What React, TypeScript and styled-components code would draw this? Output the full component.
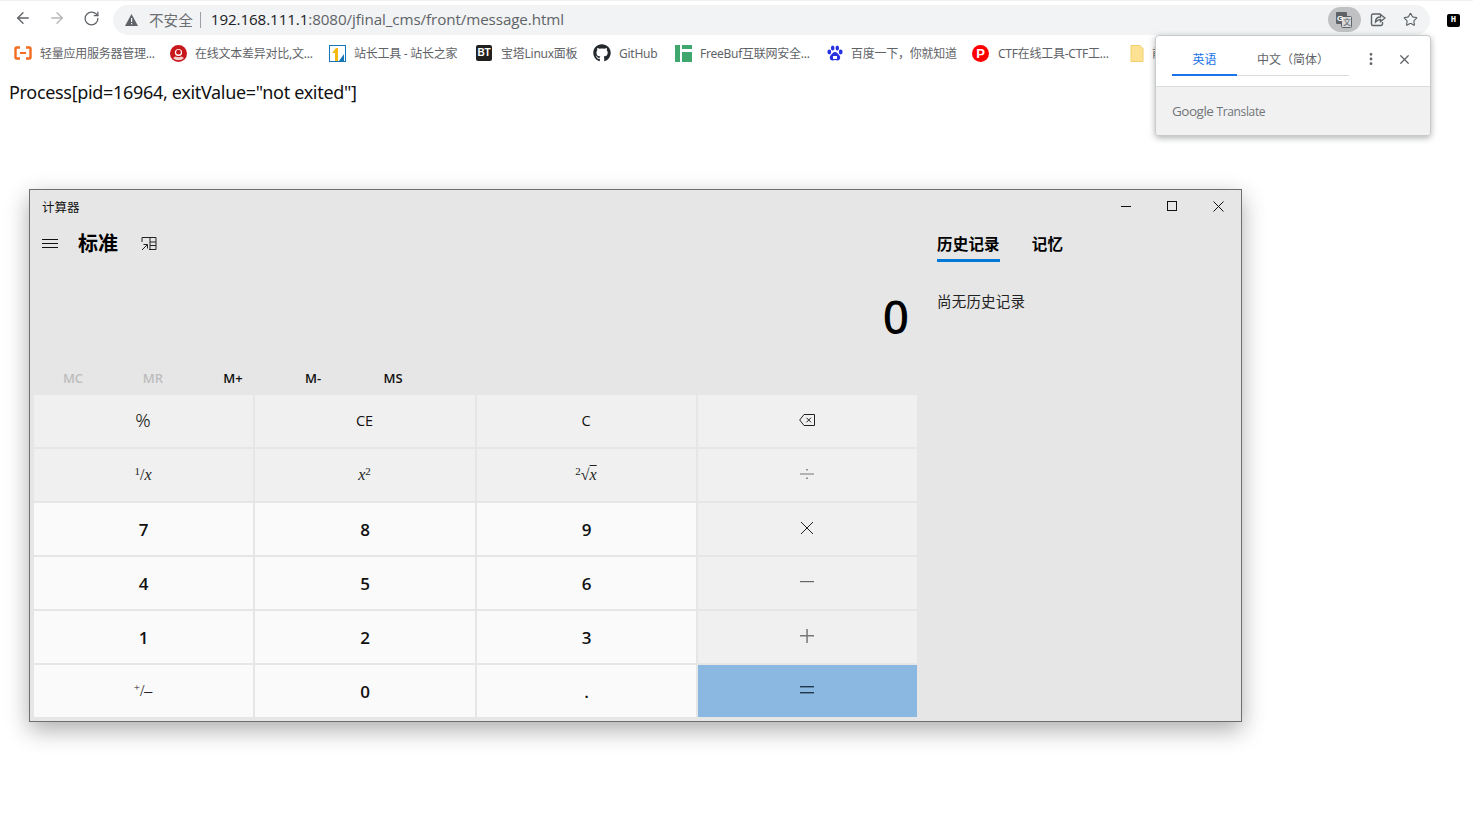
import styled, { createGlobalStyle } from "styled-components";
import { ArrowLeft, ArrowRight, RotateCw, Star, X, EllipsisVertical } from "lucide-react";
import { FaGithub } from "react-icons/fa";
import type { ReactNode } from "react";

const GlobalStyle = createGlobalStyle`
  html, body {
    margin: 0;
    padding: 0;
    background: #fff;
    overflow: hidden;
  }
`;

const SANS = `"Open Sans", "Noto Sans CJK SC", sans-serif`;
const CJK = `"Noto Sans", "Noto Sans CJK SC", sans-serif`;

const Page = styled.div`
  position: relative;
  width: 1473px;
  height: 816px;
  font-family: ${SANS};
  overflow: hidden;
`;

const Toolbar = styled.div`
  display: flex;
  align-items: center;
  height: 35px;
  padding: 0 9px 0 13px;
  box-sizing: border-box;
  border-top: 1px solid #f1f1f1;
`;

const NavButton = styled.div<{ $dim?: boolean }>`
  display: flex;
  justify-content: center;
  width: 20px;
  margin-right: 14px;
  color: ${(p) => (p.$dim ? "#b4b6b8" : "#5f6368")};
`;

const Omnibox = styled.div`
  flex: 1;
  display: flex;
  align-items: center;
  height: 30px;
  margin-top: 3px;
  margin-left: -2px;
  padding-left: 12px;
  padding-right: 3px;
  margin-right: 34px;
  border-radius: 15px;
  background: #f1f3f4;
  font-size: 15.2px;
  color: #5f6368;
`;

const Insecure = styled.span`
  margin-left: 11px;
  padding-right: 7px;
  border-right: 1px solid #9aa0a6;
  line-height: 16px;
  font-family: ${CJK};
  font-size: 14.6px;
  color: #6b6f73;
`;

const Url = styled.span`
  flex: 1;
  margin-left: 10px;
  padding-bottom: 2px;
  letter-spacing: -0.1px;
  color: #5f6368;
  b {
    font-weight: 400;
    color: #202124;
  }
`;

const OmniAction = styled.div<{ $active?: boolean }>`
  display: flex;
  align-items: center;
  justify-content: center;
  width: 33px;
  height: 25px;
  border-radius: 13px;
  background: ${(p) => (p.$active ? "#bfc1c2" : "transparent")};
  color: #5f6368;
  svg {
    margin-right: ${(p) => (p.$active ? "2px" : "0")};
  }
`;

const ExtIcon = styled.div`
  position: absolute;
  top: 14px;
  left: 1447px;
  width: 13px;
  height: 13px;
  border-radius: 2px;
  background: #000;
  color: #fff;
  font: 700 9px/13px "Liberation Mono", monospace;
  text-align: center;
`;

const Bookmarks = styled.div`
  display: flex;
  align-items: center;
  height: 36px;
  padding-left: 14px;
  white-space: nowrap;
  overflow: hidden;
`;

const Bookmark = styled.div<{ $w: number; $gap?: number }>`
  display: flex;
  align-items: center;
  flex: none;
  gap: ${(p) => p.$gap ?? 8}px;
  width: ${(p) => p.$w}px;
  font-family: ${CJK};
  font-size: 12px;
  letter-spacing: -0.25px;
  color: #5f6368;
  svg {
    flex: none;
  }
`;

const BadgeLogo = styled.span`
  flex: none;
  width: 16px;
  height: 16px;
  border-radius: 2px;
  background: #20201e;
  color: #fff;
  font: 700 10px/16px "Liberation Sans", sans-serif;
  text-align: center;
`;

const RoundLogo = styled.span`
  flex: none;
  width: 17px;
  height: 17px;
  border-radius: 50%;
  background: #f00;
  color: #fff;
  font: 700 13px/17px "Liberation Sans", sans-serif;
  text-align: center;
`;

const ProcessLine = styled.div`
  margin: 8px 0 0 9px;
  height: 27px;
  line-height: 27px;
  font-family: "Noto Sans", sans-serif;
  font-size: 18px;
  letter-spacing: -0.32px;
  color: #111;
`;

const Popup = styled.div`
  position: absolute;
  top: 35px;
  left: 1155px;
  width: 276px;
  height: 101px;
  box-sizing: border-box;
  border-radius: 4px;
  background: #fff;
  border: 1px solid #c9cacb;
  box-shadow: 0 2px 6px rgba(60, 64, 67, 0.4);
  overflow: hidden;
`;

const PopupTop = styled.div`
  display: flex;
  height: 50px;
  padding-left: 16px;
  border-bottom: 1px solid #dadce0;
`;

const LangTabs = styled.div`
  display: flex;
  align-self: flex-start;
  margin-top: 1px;
  height: 39px;
  width: 177px;
  border-bottom: 1px solid #dadce0;
  box-sizing: border-box;
`;

const LangTab = styled.div<{ $on?: boolean }>`
  width: ${(p) => (p.$on ? "65px" : "auto")};
  flex: ${(p) => (p.$on ? "none" : "1")};
  height: 39px;
  box-sizing: border-box;
  padding-top: 14px;
  text-align: center;
  font-family: ${CJK};
  font-size: 12px;
  line-height: 18px;
  white-space: nowrap;
  color: ${(p) => (p.$on ? "#1a73e8" : "#5f6368")};
  border-bottom: ${(p) => (p.$on ? "2px solid #1a73e8" : "none")};
`;

const PopupIcon = styled.div<{ $gap: number }>`
  display: flex;
  align-items: center;
  height: 46px;
  margin-left: ${(p) => p.$gap}px;
  color: #5f6368;
`;

const PopupFoot = styled.div`
  display: flex;
  align-items: center;
  height: 48px;
  padding-left: 16px;
  padding-bottom: 2px;
  background: #f1f1f1;
  color: #70757a;
  font-family: "Open Sans", sans-serif;
  font-size: 12px;
  letter-spacing: -0.35px;
  span {
    font-size: 13.5px;
    margin-right: 3px;
    letter-spacing: -0.5px;
  }
`;

const Calc = styled.div`
  margin: 83px 0 0 29px;
  width: 1213px;
  height: 533px;
  box-sizing: border-box;
  display: flex;
  flex-direction: column;
  background: #e6e6e6;
  border: 1px solid #6e6e6e;
  box-shadow: 0 8px 22px rgba(0, 0, 0, 0.32);
  font-family: ${CJK};
  color: #000;
`;

const TitleBar = styled.div`
  display: flex;
  align-items: center;
  justify-content: space-between;
  flex: none;
  height: 32px;
  padding-left: 12px;
  font-size: 12.5px;
  color: #111;
`;

const WinButtons = styled.div`
  display: flex;
`;

const WinButton = styled.div`
  display: flex;
  align-items: center;
  justify-content: center;
  width: 46px;
  height: 32px;
`;

const CalcBody = styled.div`
  flex: 1;
  display: flex;
`;

const MainPane = styled.div`
  display: flex;
  flex-direction: column;
  width: 888px;
  flex: none;
  padding-left: 4px;
`;

const ModeBar = styled.div`
  display: flex;
  align-items: center;
  box-sizing: border-box;
  height: 42px;
  margin-top: 2px;
  padding-bottom: 2px;
  padding-left: 8px;
`;

const ModeTitle = styled.div`
  margin: 0 23px 0 20px;
  font-size: 20px;
  font-weight: 700;
  line-height: 40px;
`;

const Display = styled.div`
  height: 95px;
  padding-right: 13px;
  text-align: right;
  font-family: "Noto Sans", sans-serif;
  font-weight: 500;
  font-size: 46px;
  line-height: 100px;
  color: #000;
`;

const MemoryRow = styled.div`
  display: flex;
  height: 34px;
  align-items: center;
  margin-left: -1px;
`;

const MemoryKey = styled.div<{ $off?: boolean }>`
  width: 80px;
  padding-bottom: 1px;
  text-align: center;
  font-family: "Open Sans", sans-serif;
  font-size: 13px;
  font-weight: 600;
  color: ${(p) => (p.$off ? "#bdbdbd" : "#111")};
`;

const Keypad = styled.div`
  display: grid;
  grid-template-columns: 219px 220px 219px 219px;
  grid-auto-rows: 52px;
  column-gap: 2px;
  row-gap: 2px;
`;

const KEY_BG = { fn: "#f0f0f0", num: "#fafafa", eq: "#8ab8e0" };

const Key = styled.div<{ $tone: "fn" | "num" | "eq"; $bold?: boolean }>`
  display: flex;
  align-items: center;
  justify-content: center;
  box-sizing: border-box;
  padding: ${(p) => (p.$bold ? "0" : "0 1px 2px 0")};
  background: ${(p) => KEY_BG[p.$tone]};
  color: #111;
  font-family: "Open Sans", sans-serif;
  font-size: ${(p) => (p.$bold ? "17px" : "14.5px")};
  font-weight: ${(p) => (p.$bold ? 600 : 400)};
`;

const Percent = styled.span`
  font-family: "Noto Sans", sans-serif;
  font-size: 19px;
  font-weight: 300;
`;

const MathGlyph = styled.span`
  margin-top: 2px;
  font-family: "Liberation Serif", serif;
  font-size: 16px;
  color: #222;
  i {
    font-style: italic;
  }
  u {
    text-decoration: overline;
    font-style: italic;
  }
  sup {
    font-size: 11px;
    line-height: 0;
    vertical-align: 5px;
  }
`;

const SidePane = styled.div`
  flex: 1;
  padding: 7px 0 0 15px;
`;

const SideTabs = styled.div`
  display: flex;
  gap: 32px;
`;

const SideTab = styled.div<{ $on?: boolean }>`
  height: 33px;
  box-sizing: border-box;
  border-bottom: 3px solid ${(p) => (p.$on ? "#0078d7" : "transparent")};
  font-size: 15.5px;
  font-weight: 700;
  line-height: 30px;
  letter-spacing: 0.2px;
`;

const EmptyHistory = styled.div`
  margin-top: 27px;
  font-size: 14.5px;
  line-height: 24px;
  letter-spacing: 0.2px;
  color: #222;
`;

const Orange = () => (
  <svg width="18" height="14" viewBox="0 0 18 14">
    <path d="M6 1.5H2.5a1 1 0 0 0-1 1v9a1 1 0 0 0 1 1H6M12 1.5h3.5a1 1 0 0 1 1 1v9a1 1 0 0 1-1 1H12" fill="none" stroke="#f26c21" strokeWidth="2.4" />
    <rect x="6" y="6" width="6" height="2" fill="#f26c21" />
  </svg>
);

const RedCircle = () => (
  <svg width="17" height="17" viewBox="0 0 17 17">
    <circle cx="8.5" cy="8.5" r="8.5" fill="#c8161d" />
    <circle cx="8.5" cy="7.5" r="3.6" fill="#fff" />
    <circle cx="8.5" cy="7.2" r="2.4" fill="#c8161d" />
    <path d="M3 13c3 3 8 3 11 0l-2.5-1.5c-2 1-4 1-6 0z" fill="#f4d0d0" />
  </svg>
);

const Chinaz = () => (
  <svg width="17" height="17" viewBox="0 0 17 17">
    <rect x="0.5" y="0.5" width="16" height="16" fill="#fff" stroke="#1675b9" />
    <path d="M3 8l4-5h2v13H6V8z" fill="#f5b90f" />
    <path d="M10 16l5-7v7z" fill="#1675b9" />
  </svg>
);

const FreeBuf = () => (
  <svg width="17" height="17" viewBox="0 0 17 17">
    <rect width="5" height="17" fill="#3fa66d" />
    <rect x="7" width="10" height="4" fill="#3fa66d" />
    <rect x="7" y="7" width="10" height="10" fill="#3fa66d" />
  </svg>
);

const Paw = () => (
  <svg width="16" height="17" viewBox="0 0 16 17" fill="#2932e1">
    <ellipse cx="2.3" cy="7" rx="1.9" ry="2.4" />
    <ellipse cx="5.7" cy="3" rx="1.8" ry="2.5" />
    <ellipse cx="10.3" cy="3" rx="1.8" ry="2.5" />
    <ellipse cx="13.7" cy="7" rx="1.9" ry="2.4" />
    <path d="M8 7c2 0 3 2 4.5 3.5 1.5 1.8.5 5-2 5-1 0-1.500-.4-2.500-.4s-1.500.4-2.500.4c-2.500 0-3.500-3.200-2-5C5 9 6 7 8 7z" />
    <rect x="6" y="11" width="4" height="3" fill="#fff" />
  </svg>
);

const Folder = () => (
  <svg width="14" height="17" viewBox="0 0 14 17">
    <path d="M1 .5h9l3 3v13H1z" fill="#fde293" stroke="#f2cf6b" />
  </svg>
);

const Warning = () => (
  <svg width="13" height="12" viewBox="0 0 13 12">
    <path d="M6.500 0 13 12H0z" fill="#5f6368" />
    <rect x="6" y="4" width="1.200" height="4" fill="#f1f3f4" />
    <rect x="6" y="9" width="1.200" height="1.300" fill="#f1f3f4" />
  </svg>
);

const TranslateIcon = () => (
  <svg width="16" height="16" viewBox="0 0 16 16">
    <rect x="0" y="0" width="11" height="12" rx="1" fill="#5f6368" />
    <rect x="5.500" y="4.500" width="10" height="11" rx="1" fill="#d8d9da" stroke="#5f6368" />
    <text x="1" y="8.500" fontSize="8" fontWeight="700" fontFamily="Liberation Sans, sans-serif" fill="#fff">G</text>
    <text x="7" y="13" fontSize="8" fontFamily="Noto Sans CJK SC, sans-serif" fill="#5f6368">文</text>
  </svg>
);

const ShareIcon = () => (
  <svg width="16" height="15" viewBox="0 0 16 15" fill="none" stroke="#5f6368" strokeWidth="1.400">
    <path d="M10 2H3a1.500 1.500 0 0 0-1.500 1.500v8.500A1.500 1.500 0 0 0 3 13.500h8a1.500 1.500 0 0 0 1.500-1.500V10" />
    <path d="M5.500 10c0-3 2-5 5-5V2.500L15 6l-4.500 3.500V7.500c-2 0-3.500 1-5 2.500z" fill="#f1f3f4" />
  </svg>
);

const Hamburger = () => (
  <svg width="16" height="10" viewBox="0 0 16 10" stroke="#111">
    <path d="M0 .5h16M0 4.500h16M0 8.500h16" />
  </svg>
);

const CompactIcon = () => (
  <svg width="16" height="14" viewBox="0 0 16 14" fill="none" stroke="#222">
    <path d="M1 5V.5h14v12H8M9 .5v12M9 5h6M9 8.500h6" />
    <path d="M1 13l5-5M2.500 7.500H6.500V11.500" />
  </svg>
);

const Backspace = () => (
  <svg width="16" height="12" viewBox="0 0 16 12" fill="none" stroke="#222">
    <path d="M5 .5h10.500v11H5L.7 6z" />
    <path d="M7.500 3.800l4.500 4.500M12 3.800L7.500 8.300" />
  </svg>
);

const Divide = () => (
  <svg width="14" height="12" viewBox="0 0 14 12">
    <rect y="5.500" width="14" height="1" fill="#777" />
    <rect x="6.500" y="1" width="1" height="1.500" fill="#333" />
    <rect x="6.500" y="9.500" width="1" height="1.500" fill="#333" />
  </svg>
);

const Times = () => (
  <svg width="14" height="14" viewBox="0 0 14 14" stroke="#222">
    <path d="M1 1l12 12M13 1L1 13" />
  </svg>
);

const Dash = () => (
  <svg width="14" height="2" viewBox="0 0 14 2">
    <rect width="14" height="1.200" fill="#666" />
  </svg>
);

const Cross = () => (
  <svg width="14" height="14" viewBox="0 0 14 14">
    <rect y="6" width="14" height="1.500" fill="#777" />
    <rect x="6.300" width="1.500" height="14" fill="#777" />
  </svg>
);

const Equals = () => (
  <svg width="14" height="8" viewBox="0 0 14 8">
    <rect y="0" width="14" height="1.400" fill="#22384a" />
    <rect y="6" width="14" height="1.400" fill="#22384a" />
  </svg>
);

const WinMin = () => (
  <svg width="10" height="10" viewBox="0 0 10 10">
    <rect y="5" width="10" height="1" fill="#111" />
  </svg>
);

const WinMax = () => (
  <svg width="10" height="10" viewBox="0 0 10 10" fill="none" stroke="#111">
    <rect x=".5" y=".5" width="9" height="9" />
  </svg>
);

const WinClose = () => (
  <svg width="11" height="11" viewBox="0 0 11 11" stroke="#111">
    <path d="M.5 .5l10 10M10.500 .5l-10 10" />
  </svg>
);

const bookmarks: { w: number; gap?: number; icon: ReactNode; label: string }[] = [
  { w: 156, icon: <Orange />, label: "轻量应用服务器管理..." },
  { w: 159, icon: <RedCircle />, label: "在线文本差异对比,文..." },
  { w: 147, icon: <Chinaz />, label: "站长工具 - 站长之家" },
  { w: 117, gap: 9, icon: <BadgeLogo>BT</BadgeLogo>, label: "宝塔Linux面板" },
  { w: 82, icon: <FaGithub size={18} color="#24292e" />, label: "GitHub" },
  { w: 152, icon: <FreeBuf />, label: "FreeBuf互联网安全..." },
  { w: 145, icon: <Paw />, label: "百度一下\uFF0C你就知道" },
  { w: 158, gap: 9, icon: <RoundLogo>P</RoundLogo>, label: "CTF在线工具-CTF工..." },
  { w: 40, icon: <Folder />, label: "前端" },
];

const keys: { tone: "fn" | "num" | "eq"; bold?: boolean; content: ReactNode }[] = [
  { tone: "fn", content: <Percent>%</Percent> },
  { tone: "fn", content: "CE" },
  { tone: "fn", content: "C" },
  { tone: "fn", content: <Backspace /> },
  { tone: "fn", content: <MathGlyph><sup>1</sup>/<i>x</i></MathGlyph> },
  { tone: "fn", content: <MathGlyph><i>x</i><sup>2</sup></MathGlyph> },
  { tone: "fn", content: <MathGlyph><sup>2</sup>√<u>x</u></MathGlyph> },
  { tone: "fn", content: <Divide /> },
  { tone: "num", bold: true, content: "7" },
  { tone: "num", bold: true, content: "8" },
  { tone: "num", bold: true, content: "9" },
  { tone: "fn", content: <Times /> },
  { tone: "num", bold: true, content: "4" },
  { tone: "num", bold: true, content: "5" },
  { tone: "num", bold: true, content: "6" },
  { tone: "fn", content: <Dash /> },
  { tone: "num", bold: true, content: "1" },
  { tone: "num", bold: true, content: "2" },
  { tone: "num", bold: true, content: "3" },
  { tone: "fn", content: <Cross /> },
  { tone: "num", content: <MathGlyph><sup>+</sup>/–</MathGlyph> },
  { tone: "num", bold: true, content: "0" },
  { tone: "num", bold: true, content: "." },
  { tone: "eq", content: <Equals /> },
];

export default function App() {
  return (
    <Page>
      <GlobalStyle />
      <Toolbar>
        <NavButton><ArrowLeft size={18} strokeWidth={1.8} /></NavButton>
        <NavButton $dim><ArrowRight size={18} strokeWidth={1.8} /></NavButton>
        <NavButton><RotateCw size={17} strokeWidth={1.8} /></NavButton>
        <Omnibox>
          <Warning />
          <Insecure>不安全</Insecure>
          <Url><b>192.168.111.1</b>:8080/jfinal_cms/front/message.html</Url>
          <OmniAction $active><TranslateIcon /></OmniAction>
          <OmniAction><ShareIcon /></OmniAction>
          <OmniAction><Star size={15} strokeWidth={1.8} /></OmniAction>
        </Omnibox>
      </Toolbar>
      <ExtIcon>H</ExtIcon>
      <Bookmarks>
        {bookmarks.map((b) => (
          <Bookmark key={b.label} $w={b.w} $gap={b.gap}>
            {b.icon}
            <span>{b.label}</span>
          </Bookmark>
        ))}
      </Bookmarks>
      <ProcessLine>Process[pid=16964, exitValue="not exited"]</ProcessLine>
      <Popup>
        <PopupTop>
          <LangTabs>
            <LangTab $on>英语</LangTab>
            <LangTab>中文{"\uFF08"}简体{"\uFF09"}</LangTab>
          </LangTabs>
          <PopupIcon $gap={14}><EllipsisVertical size={16} strokeWidth={2.2} /></PopupIcon>
          <PopupIcon $gap={18}><X size={15} strokeWidth={2} /></PopupIcon>
        </PopupTop>
        <PopupFoot><span>Google</span>Translate</PopupFoot>
      </Popup>
      <Calc>
        <TitleBar>
          计算器
          <WinButtons>
            <WinButton><WinMin /></WinButton>
            <WinButton><WinMax /></WinButton>
            <WinButton><WinClose /></WinButton>
          </WinButtons>
        </TitleBar>
        <CalcBody>
          <MainPane>
            <ModeBar>
              <Hamburger />
              <ModeTitle>标准</ModeTitle>
              <CompactIcon />
            </ModeBar>
            <Display>0</Display>
            <MemoryRow>
              <MemoryKey $off>MC</MemoryKey>
              <MemoryKey $off>MR</MemoryKey>
              <MemoryKey>M+</MemoryKey>
              <MemoryKey>M-</MemoryKey>
              <MemoryKey>MS</MemoryKey>
            </MemoryRow>
            <Keypad>
              {keys.map((k, i) => (
                <Key key={i} $tone={k.tone} $bold={k.bold}>{k.content}</Key>
              ))}
            </Keypad>
          </MainPane>
          <SidePane>
            <SideTabs>
              <SideTab $on>历史记录</SideTab>
              <SideTab>记忆</SideTab>
            </SideTabs>
            <EmptyHistory>尚无历史记录</EmptyHistory>
          </SidePane>
        </CalcBody>
      </Calc>
    </Page>
  );
}
